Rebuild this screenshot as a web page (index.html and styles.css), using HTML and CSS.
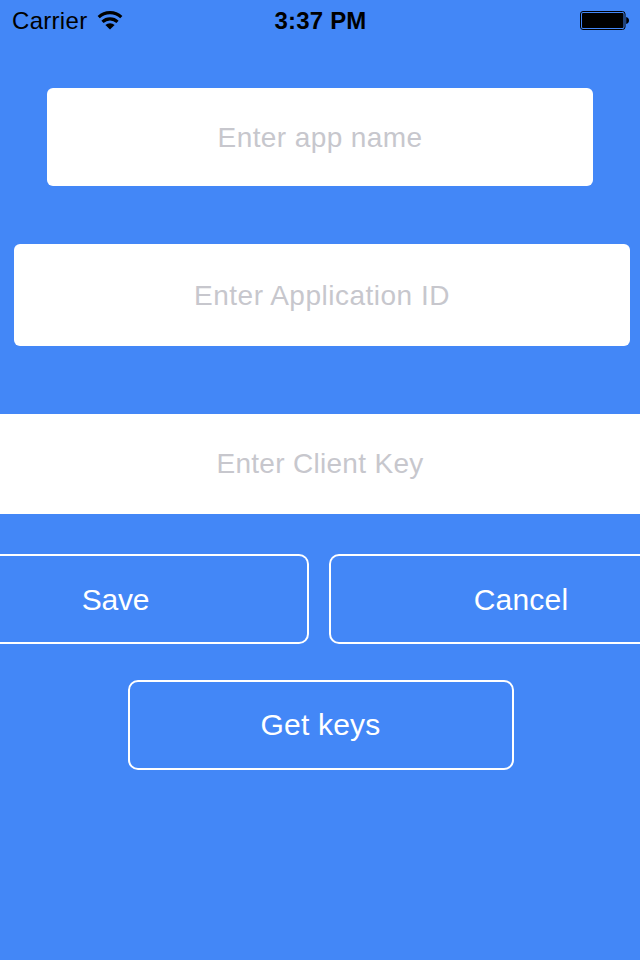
FILE: index.html
```html
<!DOCTYPE html>
<html lang="en">
<head>
<meta charset="utf-8">
<title>Add app</title>
<link rel="stylesheet" href="styles.css">
</head>
<body>
<header class="status">
  <div class="carrier"><span>Carrier</span>
    <svg class="wifi" width="26" height="20" viewBox="0 0 26 20"><g fill="none" stroke="#000" stroke-width="3.200"><path d="M1.700 7.200a16.500 16.500 0 0 1 22.600 0"/><path d="M5.500 11.800a11 11 0 0 1 15 0"/></g><path d="M8.400 15a6.600 6.600 0 0 1 9.200 0L13 19.600z"/></svg>
  </div>
  <div class="time">3:37 PM</div>
  <svg class="battery" width="49" height="19" viewBox="0 0 49 19"><rect x=".5" y=".5" width="44.500" height="18" rx="2.500" fill="none" stroke="#000"/><rect x="2" y="2" width="41.500" height="15" rx="1"/><path d="M46.200 6c1.700.4 2.800 1.700 2.800 3.500s-1.100 3.100-2.800 3.500z"/></svg>
</header>
<main class="form">
  <div class="field name"><span>Enter app name</span></div>
  <div class="field app-id"><span>Enter Application ID</span></div>
  <div class="field key"><span>Enter Client Key</span></div>
  <div class="actions">
    <div class="button save"><span>Save</span></div>
    <div class="button cancel"><span>Cancel</span></div>
  </div>
  <div class="button get-keys"><span>Get keys</span></div>
</main>
</body>
</html>
```

FILE: styles.css
```css
* { box-sizing: border-box; }
body {
  margin: 0;
  width: 640px;
  height: 960px;
  overflow: hidden;
  background: #4387f7;
  font-family: "Liberation Sans", Arial, sans-serif;
}
.status {
  height: 40px;
  padding: 0 11px 0 12px;
  display: grid;
  grid-template-columns: 1fr auto 1fr;
  align-items: center;
  font-size: 24px;
  line-height: 42px;
  color: #000;
}
.carrier { display: flex; align-items: center; gap: 10px; letter-spacing: 0.3px; }
.wifi { margin-top: -3px; }
.time { font-weight: bold; font-size: 24px; letter-spacing: 0.2px; }
.battery { justify-self: end; margin-top: -1px; }
.form { display: flex; flex-direction: column; padding-top: 48px; }
.field {
  display: flex;
  align-items: center;
  justify-content: center;
  background: #fff;
  color: #c7c7cd;
  font-size: 28px;
  letter-spacing: 0.4px;
}
.name { height: 98px; margin: 0 47px; padding-top: 2px; border-radius: 6px; }
.app-id {
  height: 102px;
  margin: 58px 10px 0 14px;
  padding-top: 2px;
  border-radius: 6px;
  letter-spacing: 0.5px;
}
.key { height: 100px; margin-top: 68px; letter-spacing: 0.3px; }
.actions { display: flex; gap: 20px; margin-top: 40px; }
.button {
  display: flex;
  align-items: center;
  justify-content: center;
  height: 90px;
  border: 2px solid #fff;
  border-radius: 10px;
  color: #fff;
  font-size: 30px;
}
.save {
  width: 309px;
  padding: 2px 76px 0 0;
  border-left: 0;
  border-radius: 0 10px 10px 0;
  letter-spacing: -0.2px;
}
.cancel {
  flex: 1;
  padding: 2px 0 0 71px;
  border-right: 0;
  border-radius: 10px 0 0 10px;
  letter-spacing: 0.2px;
}
.get-keys { width: 386px; margin: 36px 0 0 128px; padding-right: 1px; letter-spacing: 0.2px; }
```
